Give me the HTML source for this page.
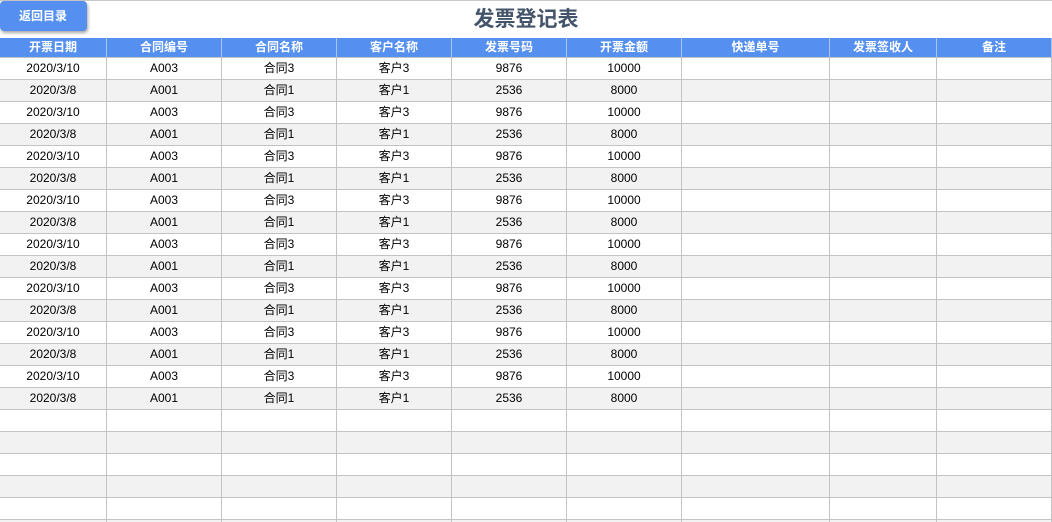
<!DOCTYPE html><html><head><meta charset="utf-8"><style>
*{margin:0;padding:0;box-sizing:border-box}
html,body{width:1052px;height:522px;overflow:hidden}
body{background:#fff;font-family:"Liberation Sans","Noto Sans CJK SC",sans-serif;position:relative}
.top{position:absolute;left:0;top:0;width:1052px;height:1px;background:#c8c8c8}
.btn{position:absolute;left:0;top:1px;width:87px;height:30px;background:#5590f0;border-radius:4px;color:#fff;font-size:12px;font-weight:bold;line-height:30px;padding-left:19px;box-shadow:1px 2px 3px rgba(0,0,0,.35);z-index:2}
.title{position:absolute;left:0;width:1052px;top:5px;text-align:center;font-size:21px;font-weight:bold;color:#44546a;line-height:30px}
.row{position:absolute;left:0;height:22px;display:flex}
.row div{height:22px;border-right:1px solid #c3c3c3;border-bottom:1px solid #c3c3c3;text-align:center;font-size:12px;line-height:21px;color:#000}
.hd{top:38px;height:20px!important}
.hd div{height:20px;background:#5590f0;color:#fff;font-weight:bold;line-height:18px;border-color:#a9c4ee;border-bottom:1px solid #c3c3c3}
.g div{background:#f2f2f2}
</style></head><body>
<div class="top"></div>
<div class="btn">返回目录</div>
<div class="title">发票登记表</div>
<div id="t"></div>
<script>
var w=[107,115,115,115,115,115,148,107,115];
var h=['开票日期','合同编号','合同名称','客户名称','发票号码','开票金额','快递单号','发票签收人','备注'];
var a=['2020/3/10','A003','合同3','客户3','9876','10000','','',''];
var b=['2020/3/8','A001','合同1','客户1','2536','8000','','',''];
var e=['','','','','','','','',''];
function row(c,top,cls){var s='<div class="row '+cls+'" style="top:'+top+'px">';for(var i=0;i<9;i++)s+='<div style="width:'+w[i]+'px">'+c[i]+'</div>';return s+'</div>';}
var s=row(h,38,'hd');
for(var r=0;r<22;r++){var c=r<16?(r%2?b:a):e;s+=row(c,58+r*22,r%2?'g':'');}
document.getElementById('t').innerHTML=s;
</script>
</body></html>
